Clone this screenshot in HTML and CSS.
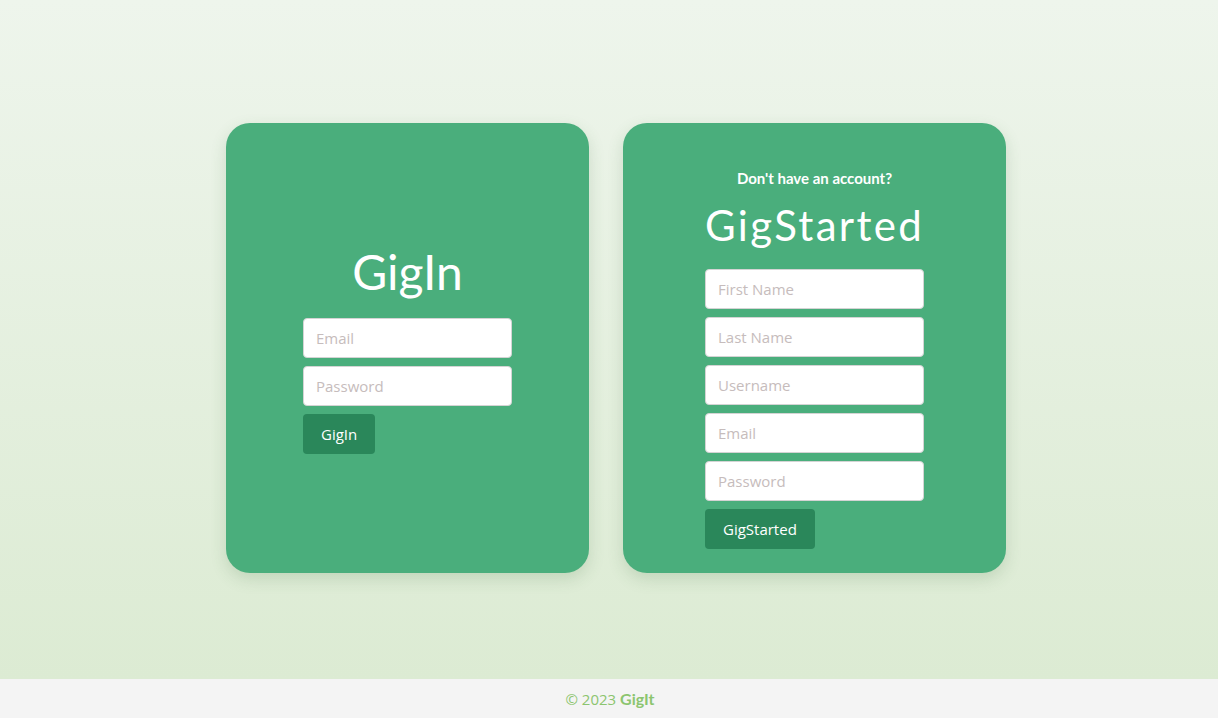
FILE: index.html
```html
<!DOCTYPE html>
<html lang="en">
<head>
<meta charset="utf-8">
<title>GigIt</title>
<link rel="stylesheet" href="styles.css">
</head>
<body>
<main class="page">
  <section class="card card-login">
    <div class="form-wrap">
      <h1 class="title">GigIn</h1>
      <form class="form login-form">
        <input class="field" type="email" placeholder="Email">
        <input class="field" type="password" placeholder="Password">
        <button class="btn" type="button">GigIn</button>
      </form>
    </div>
  </section>
  <section class="card card-signup">
    <div class="form-wrap">
      <p class="prompt">Don't have an account?</p>
      <h1 class="title title-signup">GigStarted</h1>
      <form class="form signup-form">
        <input class="field" type="text" placeholder="First Name">
        <input class="field" type="text" placeholder="Last Name">
        <input class="field" type="text" placeholder="Username">
        <input class="field" type="email" placeholder="Email">
        <input class="field" type="password" placeholder="Password">
        <button class="btn" type="button">GigStarted</button>
      </form>
    </div>
  </section>
</main>
<footer class="footer">
  <span class="copy">© 2023 <span class="brand">GigIt</span></span>
</footer>
</body>
</html>
```
FILE: styles.css
```css
* { box-sizing: border-box; }
html, body { height: 100%; }
body {
  margin: 0;
  font-family: "Open Sans", "Noto Sans", sans-serif;
  display: flex;
  flex-direction: column;
  background: #f4f4f4;
}
.page {
  height: 679px;
  background: linear-gradient(to bottom, #eef5ec 0%, #dcebd3 100%);
  display: flex;
  justify-content: center;
  align-items: flex-start;
  gap: 34px;
  padding-top: 123px;
  padding-left: 14px;
}
.card {
  height: 450px;
  background: #4aae7c;
  border-radius: 24px;
  box-shadow: 0 6px 16px rgba(60, 110, 60, 0.18);
  display: flex;
  flex-direction: column;
  align-items: center;
  justify-content: flex-start;
}
.card-login { width: 363px; padding-top: 121px; }
.card-signup { width: 383px; padding-top: 45px; }
.form-wrap {
  display: flex;
  flex-direction: column;
  align-items: stretch;
}
.card-login .form-wrap { width: 209px; }
.card-signup .form-wrap { width: 219px; }
.title {
  margin: 0 0 18px;
  font-family: "Lato", sans-serif;
  font-weight: 400;
  font-size: 48px;
  line-height: 56px;
  color: #ffffff;
  text-align: center;
}
.title-signup {
  font-size: 42px;
  line-height: 52px;
  margin: 11px 0 18px;
  letter-spacing: 2.3px;
  white-space: nowrap;
}
.prompt {
  margin: 0;
  font-family: "Lato", sans-serif;
  font-weight: 700;
  font-size: 15px;
  line-height: 20px;
  color: #ffffff;
  text-align: center;
}
.form {
  display: flex;
  flex-direction: column;
  align-items: flex-start;
  gap: 8px;
}
.field {
  width: 100%;
  height: 40px;
  padding: 0 12px;
  border: 1px solid #d4d4d4;
  border-radius: 4px;
  background: #ffffff;
  font-family: "Open Sans", "Noto Sans", sans-serif;
  font-size: 15px;
  color: #333;
  outline: none;
}
.field::placeholder { color: #c6bcbc; }
.btn {
  height: 40px;
  padding: 0 18px;
  border: none;
  border-radius: 4px;
  background: #2a875a;
  color: #ffffff;
  font-family: "Open Sans", "Noto Sans", sans-serif;
  font-size: 15px;
  cursor: pointer;
}
.footer {
  height: 39px;
  background: #f4f4f4;
  display: flex;
  align-items: center;
  justify-content: center;
  padding-left: 2px;
}
.copy {
  font-family: "Open Sans", "Noto Sans", sans-serif;
  font-size: 15px;
  color: #8cc56f;
}
.brand {
  font-family: "Lato", sans-serif;
  font-weight: 700;
  font-size: 16px;
}
```
